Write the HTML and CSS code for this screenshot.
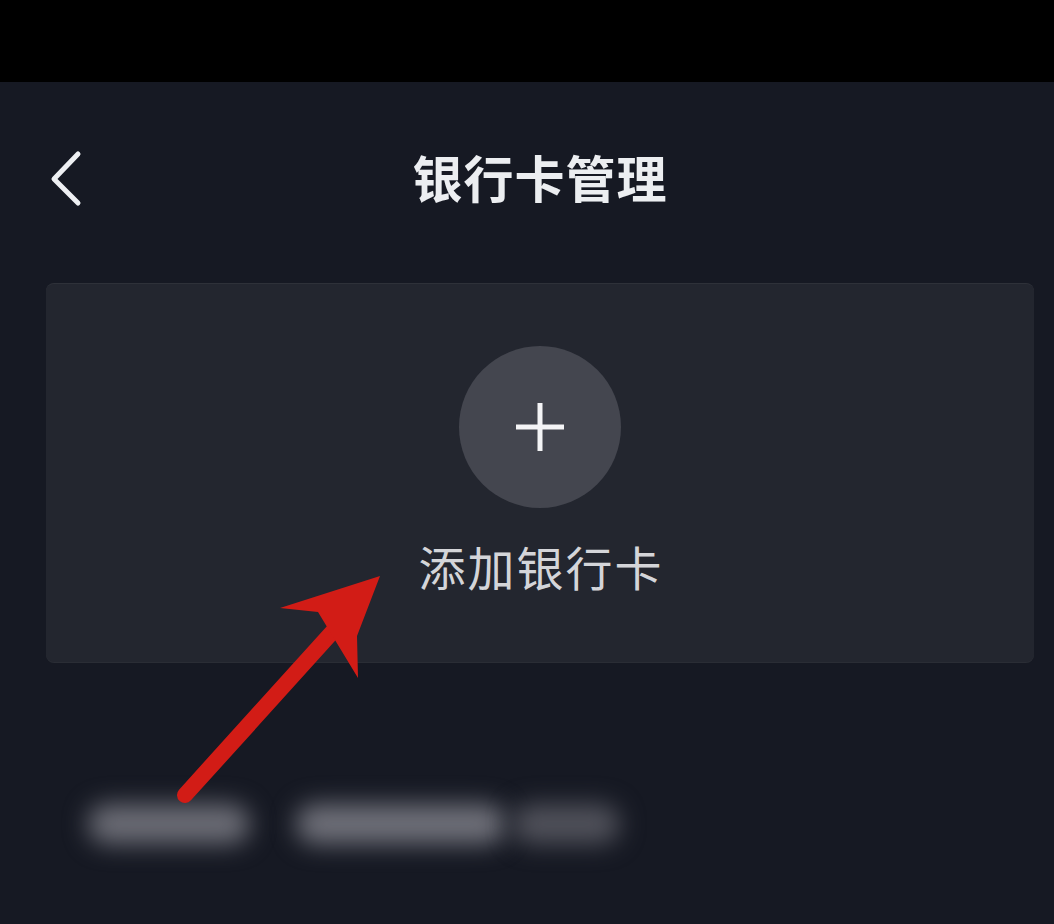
FILE: index.html
```html
<!DOCTYPE html>
<html lang="zh-CN">
<head>
<meta charset="utf-8">
<title>银行卡管理</title>
<link rel="stylesheet" href="styles.css">
</head>
<body>
<div class="topbar"></div>
<main class="screen">
  <header class="nav">
    <button class="back" aria-label="返回">
      <svg width="40" height="60" viewBox="0 0 40 60"><path d="M30 6 L6 31 L30 55" fill="none" stroke="#eef0f3" stroke-width="5" stroke-linecap="round" stroke-linejoin="round"/></svg>
    </button>
    <h1 class="title">银行卡管理</h1>
  </header>
  <section class="card">
    <div class="plus">
      <svg width="52" height="52" viewBox="0 0 52 52"><path d="M26 2 V50 M2 26 H50" stroke="#f4f4f6" stroke-width="5"/></svg>
    </div>
    <div class="add-label">添加银行卡</div>
  </section>
  <div class="blurred">
    <span class="blob b1"></span>
    <span class="blob b2"></span>
    <span class="blob b3"></span>
  </div>
  <svg class="arrow" width="1054" height="924" viewBox="0 0 1054 924">
    <path d="M185 795 L345 618" stroke="#d21c16" stroke-width="16" stroke-linecap="round"/>
    <path d="M380 576 L280 608 L318 612 L358 678 L357 636 Z" fill="#d21c16"/>
  </svg>
</main>
</body>
</html>
```
FILE: styles.css
```css
html, body {
  margin: 0;
  padding: 0;
  background: #161923;
  font-family: "Noto Sans CJK SC", "Noto Sans", sans-serif;
}
.topbar {
  height: 82px;
  background: #000;
}
.screen {
  height: 842px;
  background: #161923;
  overflow: hidden;
  display: flex;
  flex-direction: column;
}
.nav {
  height: 201px;
  display: flex;
  align-items: center;
  justify-content: center;
  padding-bottom: 9px;
  box-sizing: border-box;
  position: relative;
}
.back {
  position: absolute;
  left: 48px;
  top: 66px;
  background: none;
  border: 0;
  padding: 0;
  width: 40px;
  height: 60px;
}
.title {
  margin: 0;
  font-size: 50px;
  font-weight: 700;
  color: #eceef1;
  letter-spacing: 1px;
  line-height: 1;
  transform: translate(13px, -2px);
}
.card {
  margin: 0 20px 0 46px;
  height: 379px;
  background: #23262f;
  border-radius: 8px;
  border-top: 1px solid #2e3139;
  box-shadow: 0 1px 0 #2a2d35;
  display: flex;
  flex-direction: column;
  align-items: center;
  padding-top: 62px;
  box-sizing: border-box;
}
.plus {
  width: 162px;
  height: 162px;
  border-radius: 50%;
  background: #44464f;
  display: flex;
  align-items: center;
  justify-content: center;
}
.add-label {
  margin-top: 34px;
  font-size: 47px;
  color: #d4d5d9;
  line-height: 1;
  letter-spacing: 2px;
  transform: translateX(1px);
}
.blurred {
  display: flex;
  align-items: center;
  gap: 46px;
  padding-left: 88px;
  margin-top: 140px;
  height: 44px;
}
.blob {
  height: 40px;
  border-radius: 20px;
  filter: blur(12px);
  background: #6b6c75;
}
.b1 { width: 162px; }
.b2 { width: 210px; background: #6f7079; }
.b3 { width: 108px; margin-left: -40px; background: #50515a; }
.arrow {
  position: absolute;
  left: 0;
  top: 0;
  pointer-events: none;
}
```
